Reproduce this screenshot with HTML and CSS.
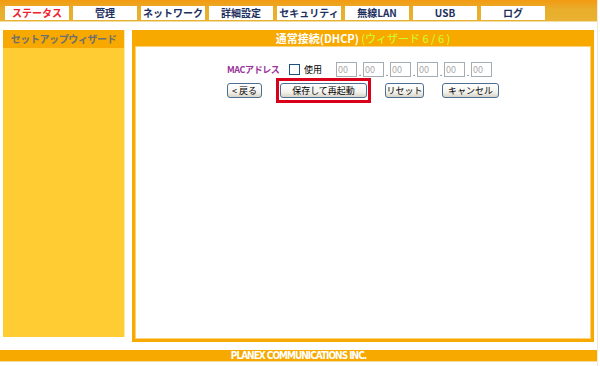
FILE: index.html
```html
<!DOCTYPE html>
<html>
  <head>
    <meta charset="utf-8" />
    <title>PLANEX ルータ設定</title>
    <link rel="stylesheet" href="styles.css">
  </head>
  <body>
    <div class="page">
      <div class="topnav">
        <a class="tab active">ステータス</a>
        <a class="tab">管理</a>
        <a class="tab">ネットワーク</a>
        <a class="tab">詳細設定</a>
        <a class="tab">セキュリティ</a>
        <a class="tab">無線LAN</a>
        <a class="tab">USB</a>
        <a class="tab">ログ</a>
      </div>
      <div class="content">
        <div class="side">
          <p class="side-title">セットアップウィザード</p>
        </div>
        <div class="panel">
          <p class="panel-title">通常接続(DHCP) <span class="step">(ウィザード 6 / 6 )</span></p>
          <div class="panel-body">
            <div class="form">
              <div class="mac-row">
                <span class="mac-label">MACアドレス</span>
                <span class="check"></span>
                <span class="use">使用</span>
                <span class="mac">
                  <span class="field">00</span><i>.</i>
                  <span class="field">00</span><i>.</i>
                  <span class="field">00</span><i>.</i>
                  <span class="field">00</span><i>.</i>
                  <span class="field">00</span><i>.</i>
                  <span class="field">00</span>
                </span>
              </div>
              <div class="btn-row">
                <button class="btn back">&lt; 戻る</button>
                <span class="mark"><button class="btn save">保存して再起動</button></span>
                <button class="btn reset">リセット</button>
                <button class="btn cancel">キャンセル</button>
              </div>
            </div>
          </div>
        </div>
      </div>
      <div class="footer">PLANEX COMMUNICATIONS INC.</div>
    </div>
  </body>
</html>
```

FILE: styles.css
```css
html {
  font-family: "Noto Sans CJK JP", "DejaVu Sans", sans-serif;
}
body {
  margin: 0;
  background-color: #ffffff;
}
p {
  margin: 0;
}
.page {
  width: 597px;
  height: 366px;
  border-right: 1px solid #eee9dc;
}
.topnav {
  height: 22px;
  box-sizing: border-box;
  padding: 6px 0 0 5px;
  display: flex;
  gap: 4px;
  background: linear-gradient(#f39a12, #e8ae2c 45%, #e9b230);
  border-bottom: 1px solid #f3dca0;
}
.tab {
  width: 64px;
  height: 14px;
  background-color: #ffffff;
  color: #1d2f5e;
  font-size: 10px;
  font-weight: bold;
  line-height: 14px;
  text-align: center;
  white-space: nowrap;
}
.tab.active {
  color: #f0202a;
}
.content {
  display: flex;
  gap: 7px;
  padding: 8px 0 0 3px;
}
.side {
  width: 121px;
  height: 307px;
  background-color: #ffcc33;
  border-right: 1px solid #ffe9a8;
}
.side-title {
  height: 18px;
  background-color: #f7a900;
  color: #6e6e6e;
  font-size: 10px;
  font-weight: bold;
  line-height: 18px;
  text-align: center;
  letter-spacing: -0.4px;
}
.panel {
  width: 462px;
  height: 312px;
  box-sizing: border-box;
  padding: 0 3px 3px;
  background-color: #f7a900;
  display: flex;
  flex-direction: column;
}
.panel-title {
  height: 16px;
  color: #ffffff;
  font-size: 11px;
  font-weight: bold;
  line-height: 16px;
  text-align: center;
}
.step {
  color: #ccff33;
  font-weight: normal;
}
.panel-body {
  flex: 1;
  background-color: #ffffff;
  border: 1px solid #fbd37a;
  padding-top: 14px;
}
.form {
  width: 272px;
  margin: 0 auto;
  white-space: nowrap;
}
.mac-row {
  display: flex;
  align-items: center;
  height: 16px;
  font-size: 9px;
}
.mac-label {
  color: #993399;
  font-weight: bold;
  width: 62px;
  letter-spacing: -0.4px;
}
.check {
  width: 9px;
  height: 9px;
  border: 1px solid #1c5180;
  margin-right: 4px;
}
.use {
  width: 32px;
}
.mac {
  display: flex;
  align-items: flex-end;
}
.mac i {
  font-style: normal;
  width: 6px;
  text-align: center;
  line-height: 8px;
  color: #666666;
}
.field {
  width: 18px;
  height: 13px;
  border: 1px solid #a5acb2;
  color: #aaaaaa;
  font-size: 9px;
  line-height: 13px;
  padding-left: 1px;
}
.btn-row {
  display: flex;
  align-items: center;
  margin-top: 1px;
}
.btn {
  height: 15px;
  padding: 0;
  border: 1px solid #4e6f95;
  border-radius: 3px;
  background: linear-gradient(#ffffff, #f4f3ee 60%, #d8d5c8);
  font-family: "Noto Sans CJK JP", sans-serif;
  font-size: 9px;
  line-height: 13px;
  color: #000000;
  white-space: nowrap;
}
.back {
  width: 35px;
}
.mark {
  border: 3px solid #d9001b;
  padding: 2px 1px;
  margin-left: 14px;
}
.save {
  width: 87px;
  display: block;
}
.reset {
  width: 39px;
  margin-left: 14px;
}
.cancel {
  width: 57px;
  margin-left: 18px;
}
.footer {
  margin-top: 8px;
  height: 11px;
  background-color: #f7a900;
  color: #ffffff;
  font-family: "DejaVu Sans Condensed", "DejaVu Sans", sans-serif;
  font-size: 10px;
  font-weight: bold;
  line-height: 11px;
  text-align: center;
  letter-spacing: -1px;
  border-bottom: 1px solid #f3dca0;
}
```
